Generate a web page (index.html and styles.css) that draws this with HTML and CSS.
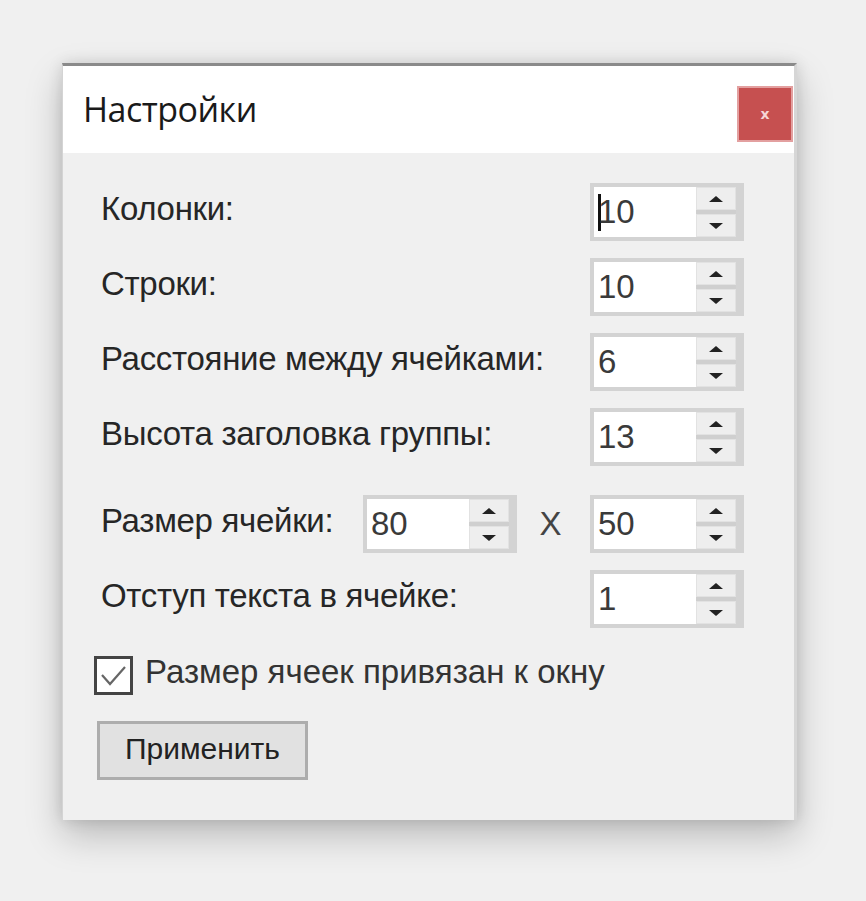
FILE: index.html
```html
<!DOCTYPE html>
<html lang="ru">
<head>
<meta charset="utf-8">
<title>Настройки</title>
<link rel="stylesheet" href="styles.css">
</head>
<body>
<div class="window">
  <div class="titlebar">
    <span class="title">Настройки</span>
    <button class="close">x</button>
  </div>
  <div class="content">
    <div class="rows">
      <div class="row">
        <span class="label">Колонки:</span>
        <div class="spin"><div class="field"><span class="caret"></span>10</div><div class="arrows"><span class="arrow"><i class="up"></i></span><span class="arrow"><i class="down"></i></span></div></div>
      </div>
      <div class="row">
        <span class="label">Строки:</span>
        <div class="spin"><div class="field">10</div><div class="arrows"><span class="arrow"><i class="up"></i></span><span class="arrow"><i class="down"></i></span></div></div>
      </div>
      <div class="row">
        <span class="label">Расстояние между ячейками:</span>
        <div class="spin"><div class="field">6</div><div class="arrows"><span class="arrow"><i class="up"></i></span><span class="arrow"><i class="down"></i></span></div></div>
      </div>
      <div class="row">
        <span class="label">Высота заголовка группы:</span>
        <div class="spin"><div class="field">13</div><div class="arrows"><span class="arrow"><i class="up"></i></span><span class="arrow"><i class="down"></i></span></div></div>
      </div>
      <div class="row row-size">
        <span class="label label-size">Размер ячейки:</span>
        <div class="spin"><div class="field">80</div><div class="arrows"><span class="arrow"><i class="up"></i></span><span class="arrow"><i class="down"></i></span></div></div>
        <span class="times">X</span>
        <div class="spin"><div class="field">50</div><div class="arrows"><span class="arrow"><i class="up"></i></span><span class="arrow"><i class="down"></i></span></div></div>
      </div>
      <div class="row">
        <span class="label">Отступ текста в ячейке:</span>
        <div class="spin"><div class="field">1</div><div class="arrows"><span class="arrow"><i class="up"></i></span><span class="arrow"><i class="down"></i></span></div></div>
      </div>
    </div>
    <label class="check">
      <span class="box"><svg width="33" height="33" viewBox="0 0 33 33"><polyline points="5,16 13,25 28,8" fill="none" stroke="#666" stroke-width="2.2"/></svg></span>
      <span class="check-text">Размер ячеек привязан к окну</span>
    </label>
    <button class="apply">Применить</button>
  </div>
</div>
</body>
</html>
```
FILE: styles.css
```css
html, body {
  margin: 0;
  padding: 0;
  background: #f0f0f0;
}

body {
  font-family: "Liberation Sans", Arial, sans-serif;
  color: #222;
  min-height: 901px;
  padding-top: 63px;
  box-sizing: border-box;
}

.window {
  box-sizing: border-box;
  margin: 0 0 0 62px;
  width: 735px;
  height: 757px;
  background: #f0f0f0;
  border-top: 3px solid #8a8a8a;
  border-left: 1px solid #d4d4d4;
  border-right: 3px solid #d6d6d6;
  box-shadow: 0 16px 34px rgba(0, 0, 0, 0.22), 0 0 14px rgba(0, 0, 0, 0.12);
  display: flex;
  flex-direction: column;
}

.titlebar {
  height: 87px;
  background: #fff;
  display: flex;
  align-items: flex-start;
  justify-content: space-between;
  padding-left: 20px;
  padding-right: 1px;
}

.title {
  font-family: "Open Sans", "Noto Sans", sans-serif;
  font-size: 34px;
  letter-spacing: -0.5px;
  color: #1a1a1a;
  line-height: 1;
  margin-top: 26px;
}

.close {
  margin-top: 20px;
  width: 56px;
  height: 56px;
  background: #c65050;
  border: 2px solid #e3a0a0;
  color: #f6d6d6;
  font-family: "DejaVu Sans", sans-serif;
  font-weight: bold;
  font-size: 14px;
  padding: 0;
  line-height: 1;
}

.content {
  flex: 1;
  padding: 30px 50px 0 38px;
  display: flex;
  flex-direction: column;
  align-items: flex-start;
}

.rows {
  align-self: stretch;
  display: flex;
  flex-direction: column;
  gap: 17px;
}

.row {
  display: flex;
  align-items: center;
  height: 58px;
}

.row-size {
  margin-top: 12px;
}

.label {
  flex: 1;
  font-size: 33px;
  letter-spacing: -0.3px;
  color: #262626;
  margin-top: -6px;
}

.label-size {
  flex: 0 0 262px;
}

.times {
  flex: 1;
  text-align: center;
  font-size: 33px;
  color: #444;
  margin-left: -6px;
}

.spin {
  box-sizing: border-box;
  width: 154px;
  height: 58px;
  display: flex;
  background: #fff;
  border: 4px solid #d3d3d3;
  border-right-width: 8px;
}

.field {
  flex: 1;
  display: flex;
  align-items: center;
  padding-left: 4px;
  font-size: 33px;
  color: #3a3a3a;
}

.caret {
  display: inline-block;
  width: 3px;
  height: 37px;
  background: #111;
  margin-right: -3px;
}

.arrows {
  width: 40px;
  display: flex;
  flex-direction: column;
  gap: 4px;
  background: #cfcfcf;
}

.arrow {
  flex: 1;
  background: #eeeeee;
  border: 1px solid #e2e2e2;
  display: flex;
  align-items: center;
  justify-content: center;
}

.up {
  width: 0;
  height: 0;
  border-left: 7px solid transparent;
  border-right: 7px solid transparent;
  border-bottom: 6px solid #222;
}

.down {
  width: 0;
  height: 0;
  border-left: 7px solid transparent;
  border-right: 7px solid transparent;
  border-top: 6px solid #222;
}

.check {
  display: flex;
  align-items: center;
  gap: 12px;
  margin-top: 28px;
  margin-left: -7px;
}

.box {
  box-sizing: border-box;
  width: 39px;
  height: 39px;
  border: 3px solid #444;
  background: #fff;
  display: flex;
}

.check-text {
  font-size: 33px;
  color: #333;
  margin-top: -8px;
}

.apply {
  margin-top: 26px;
  margin-left: -4px;
  width: 211px;
  height: 59px;
  background: #e1e1e1;
  border: 3px solid #adadad;
  font-family: "Liberation Sans", Arial, sans-serif;
  font-size: 30px;
  color: #222;
  padding: 0 0 4px 0;
}
```
